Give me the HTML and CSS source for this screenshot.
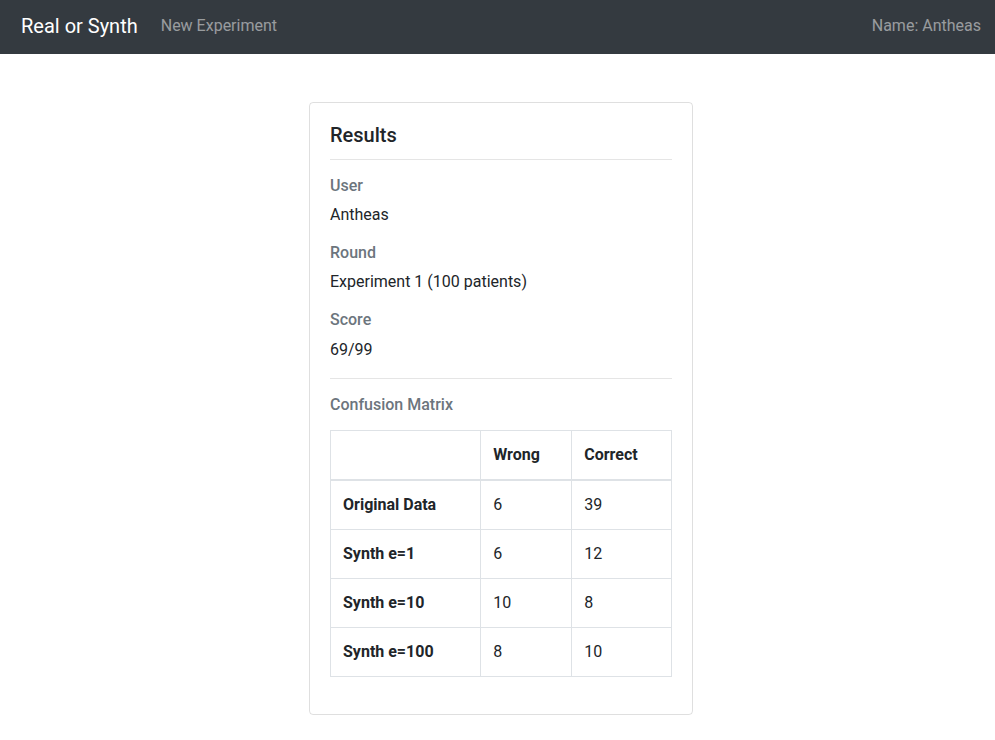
FILE: index.html
```html
<!DOCTYPE html>
<html lang="en">
<head>
<meta charset="utf-8">
<title>Real or Synth</title>
<link rel="stylesheet" href="styles.css">
</head>
<body>
<nav class="navbar">
  <div class="nav-left">
    <a class="brand" href="#">Real or Synth</a>
    <a class="nav-link" href="#">New Experiment</a>
  </div>
  <span class="nav-user">Name: Antheas</span>
</nav>
<main class="page">
  <section class="card">
    <h5 class="card-title">Results</h5>
    <hr class="divider">
    <h6 class="label">User</h6>
    <p class="value">Antheas</p>
    <h6 class="label">Round</h6>
    <p class="value">Experiment 1 (100 patients)</p>
    <h6 class="label">Score</h6>
    <p class="value">69/99</p>
    <hr class="divider">
    <h6 class="label label-matrix">Confusion Matrix</h6>
    <table class="matrix">
      <thead>
        <tr><th></th><th>Wrong</th><th>Correct</th></tr>
      </thead>
      <tbody>
        <tr><th>Original Data</th><td>6</td><td>39</td></tr>
        <tr><th>Synth e=1</th><td>6</td><td>12</td></tr>
        <tr><th>Synth e=10</th><td>10</td><td>8</td></tr>
        <tr><th>Synth e=100</th><td>8</td><td>10</td></tr>
      </tbody>
    </table>
  </section>
</main>
</body>
</html>
```

FILE: styles.css
```css
* { box-sizing: border-box; }
html, body {
  margin: 0;
  padding: 0;
}
body {
  font-family: Roboto, "Liberation Sans", Arial, sans-serif;
  font-size: 16px;
  line-height: 1.5;
  color: #212529;
  background: #fff;
}
.navbar {
  height: 54px;
  background: #343a40;
  display: flex;
  align-items: center;
  justify-content: space-between;
  padding: 0 14px 2px 21px;
}
.nav-left {
  display: flex;
  align-items: center;
}
.brand {
  color: #fff;
  font-size: 20px;
  text-decoration: none;
  margin-right: 15px;
  line-height: 30px;
}
.nav-link {
  color: rgba(255,255,255,.5);
  text-decoration: none;
  padding: 0 8px;
}
.nav-user {
  color: rgba(255,255,255,.5);
}
.page {
  display: flex;
  justify-content: center;
  padding: 48px 0 0 7px;
}
.card {
  width: 384px;
  border: 1px solid rgba(0,0,0,.125);
  border-radius: 4px;
  padding: 20px 20px 21px;
}
.card-title {
  margin: 0 0 12px;
  font-size: 20px;
  font-weight: 500;
  line-height: 1.2;
}
.divider {
  margin: 16px 0;
  border: 0;
  border-top: 1px solid rgba(0,0,0,.1);
}
.card-title + .divider { margin-top: 12px; }
.label {
  margin: 0 0 8px;
  font-size: 16px;
  font-weight: 500;
  line-height: 1.2;
  color: #6c757d;
}
.label-matrix { margin-bottom: 16px; }
.value {
  margin: 0 0 16px;
}
.matrix {
  width: 100%;
  border-collapse: collapse;
  margin-bottom: 16px;
}
.matrix th, .matrix td {
  border: 1px solid #dee2e6;
  padding: 12px;
  text-align: left;
  vertical-align: top;
}
.matrix th { font-weight: 700; }
.matrix thead th {
  border-bottom-width: 2px;
  vertical-align: bottom;
}
```
